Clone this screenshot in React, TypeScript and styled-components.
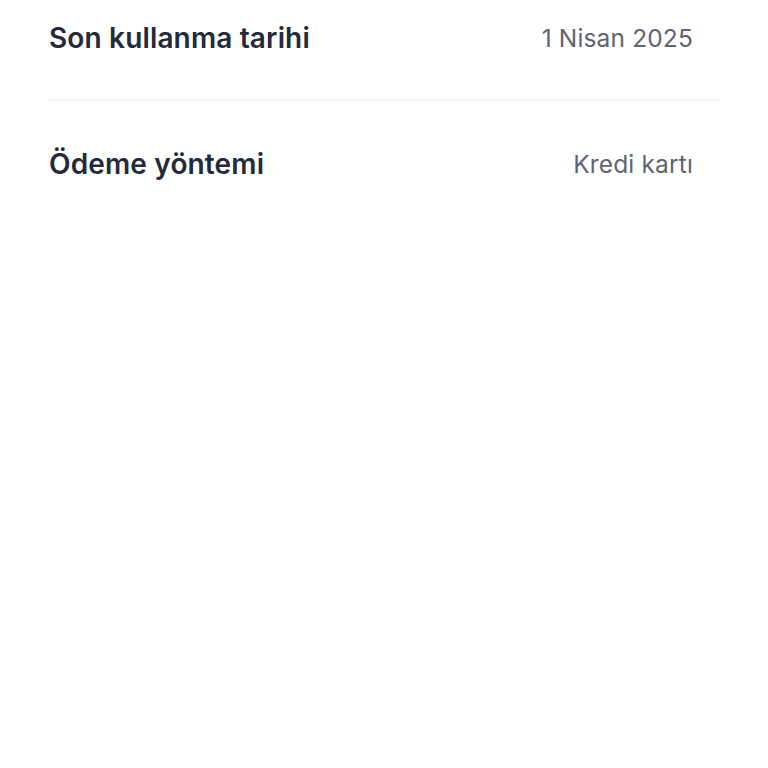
import React from "react";
import styled, { createGlobalStyle } from "styled-components";

const Global = createGlobalStyle`
  html, body { margin: 0; padding: 0; background: #ffffff; }
  body { font-family: Inter, "Noto Sans", sans-serif; }
`;

const List = styled.div`
  margin: 0 48px;
  display: flex;
  flex-direction: column;
`;

const Row = styled.div<{ $first?: boolean; $divider?: boolean }>`
  display: flex;
  align-items: center;
  justify-content: space-between;
  padding: ${(p) => (p.$first ? "20px" : "45px")} 27px 43px 0;
  border-bottom: ${(p) => (p.$divider ? "2px solid #f1f2f4" : "none")};
`;

const Label = styled.span`
  font-size: 28px;
  line-height: 36px;
  font-weight: 600;
  letter-spacing: 0.15px;
  color: #232a3b;
  padding-left: 1px;
`;

const Value = styled.span`
  font-size: 24.5px;
  line-height: 36px;
  font-weight: 400;
  letter-spacing: 0.15px;
  color: #5e6572;
`;

const rows = [
  { label: "Son kullanma tarihi", value: "1 Nisan 2025" },
  { label: "Ödeme yöntemi", value: "Kredi kartı" },
];

export default function App() {
  return (
    <>
      <Global />
      <List>
        {rows.map((r, i) => (
          <Row key={r.label} $first={i === 0} $divider={i < rows.length - 1}>
            <Label>{r.label}</Label>
            <Value>{r.value}</Value>
          </Row>
        ))}
      </List>
    </>
  );
}
